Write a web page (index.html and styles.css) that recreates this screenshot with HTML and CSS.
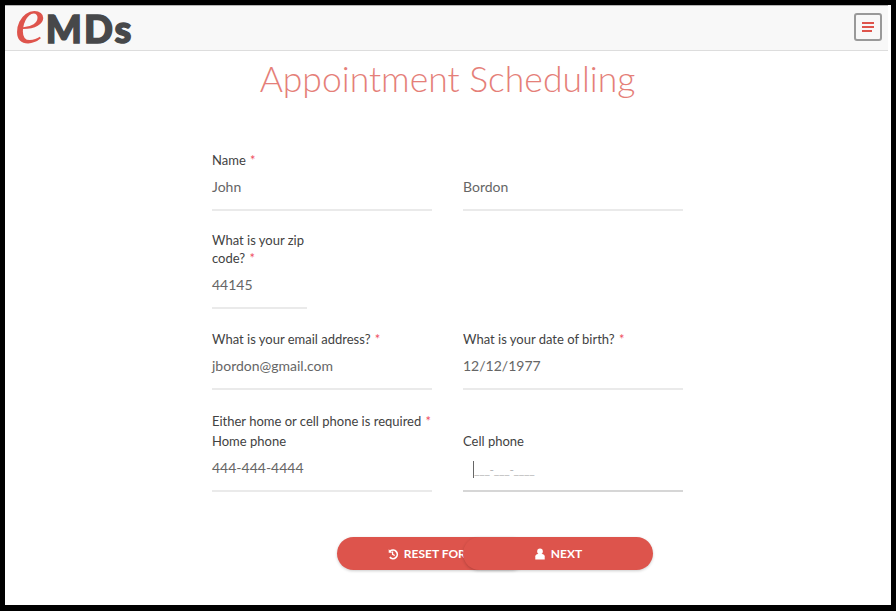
FILE: index.html
```html
<!DOCTYPE html>
<html>
<head>
<meta charset="utf-8">
<meta name="viewport" content="width=device-width, initial-scale=1.0">
<title>Appointment Scheduling</title>
<link rel="stylesheet" href="styles.css">
</head>
<body>
<div class="frame">
  <div class="navbar">
    <a class="logo"><span class="logo-e">e</span><span class="logo-mds">MDs</span></a>
    <button class="menu-toggle" type="button">
      <span></span><span></span><span class="short"></span>
    </button>
  </div>
  <h1 class="title">Appointment Scheduling</h1>
  <form class="form">
    <div class="row">
      <div class="field">
        <label>Name <i>*</i></label>
        <div class="value">John</div>
      </div>
      <div class="field">
        <label>&nbsp;</label>
        <div class="value">Bordon</div>
      </div>
    </div>
    <div class="row">
      <div class="field zip">
        <label>What is your zip code? <i>*</i></label>
        <div class="value">44145</div>
      </div>
    </div>
    <div class="row">
      <div class="field">
        <label>What is your email address? <i>*</i></label>
        <div class="value">jbordon@gmail.com</div>
      </div>
      <div class="field">
        <label>What is your date of birth? <i>*</i></label>
        <div class="value">12/12/1977</div>
      </div>
    </div>
    <p class="note">Either home or cell phone is required <i>*</i></p>
    <div class="row">
      <div class="field">
        <label>Home phone</label>
        <div class="value">444-444-4444</div>
      </div>
      <div class="field">
        <label>Cell phone</label>
        <div class="value focused"><span class="caret"></span><span class="mask">___-___-____</span></div>
      </div>
    </div>
    <div class="actions">
      <button class="btn" type="button">
        <svg class="icon" viewBox="0 0 14 14"><path d="M2 1.500v4h4L4.600 4.100A4 4 0 1 1 4 10l-1.500 1.400A6 6 0 1 0 3.200 2.700Z" fill="#fff"/><path d="M6.500 4v3.500l2.500 1.300" fill="none" stroke="#fff" stroke-width="1.500"/></svg>
        RESET FORM
      </button>
      <button class="btn btn-next" type="button">
        <svg class="icon" viewBox="0 0 14 14"><circle cx="7" cy="4" r="3.300" fill="#fff"/><path d="M1.500 13.500V10c0-2 1.500-3 3-3h5c1.500 0 3 1 3 3v3.500Z" fill="#fff"/></svg>
        NEXT
      </button>
    </div>
  </form>
</div>
</body>
</html>
```

FILE: styles.css
```css
html, body {
  margin: 0;
  height: 100%;
  background: #000;
}
body {
  padding: 5px 5px 6px 5px;
  box-sizing: border-box;
  font-family: Lato, "Open Sans", sans-serif;
  color: #424242;
}
.frame {
  height: 100%;
  background: #fff;
}
.navbar {
  height: 42px;
  margin-right: 3px;
  display: flex;
  align-items: center;
  justify-content: space-between;
  padding: 0 6px 2px 10px;
  background: #f8f8f8;
  border-top: 1px solid #b5b5b5;
  border-bottom: 1px solid #ddd;
}
.logo {
  display: flex;
  align-items: baseline;
  padding-bottom: 6px;
}
.logo-e {
  font-family: "Liberation Serif", serif;
  font-style: italic;
  font-size: 67px;
  line-height: 44px;
  color: #de544c;
}
.logo-mds {
  font-family: Lato, sans-serif;
  font-weight: 900;
  font-size: 38px;
  line-height: 44px;
  margin-left: 1px;
  letter-spacing: 2px;
  -webkit-text-stroke: 1.500px #47484a;
  color: #47484a;
}
.menu-toggle {
  width: 28px;
  height: 28px;
  padding: 0;
  display: flex;
  flex-direction: column;
  align-items: center;
  justify-content: center;
  gap: 2px;
  background: #f8f8f8;
  border: 2px solid #999;
  border-radius: 3px;
}
.menu-toggle span {
  width: 12px;
  height: 2px;
  background: #de544c;
}
.menu-toggle .short {
  width: 10px;
  margin-right: 2px;
}
.title {
  margin: 6px 0 0;
  padding-right: 1px;
  text-align: center;
  font-weight: 300;
  font-size: 35.500px;
  line-height: 44px;
  color: #e57f79;
}
.form {
  width: 471px;
  margin: 0 0 0 207px;
  padding: 50px 0 0;
  font-size: 13px;
}
.row {
  display: flex;
  gap: 31px;
  margin-bottom: 21px;
}
.row:first-child {
  margin-bottom: 20px;
}
.field {
  width: 220px;
}
.field.zip {
  width: 95px;
}
label, .note {
  display: block;
  line-height: 18px;
  color: #424242;
}
.note {
  margin: 0 0 2px;
  padding-top: 1px;
}
i {
  font-style: normal;
  color: #ef4f5f;
  margin-left: 1px;
}
.value {
  height: 36px;
  margin-top: 4px;
  line-height: 27px;
  color: #666;
  font-size: 14px;
  border-bottom: 2px solid #eaeaea;
}
.value.focused {
  display: flex;
  align-items: center;
  padding: 0 0 6px 10px;
  height: 30px;
  border-bottom-color: #d6d6d6;
}
.caret {
  width: 1px;
  height: 17px;
  background: #666;
}
.mask {
  font-size: 12px;
  letter-spacing: -0.300px;
  color: #b5b5b5;
}
.actions {
  display: flex;
  justify-content: flex-start;
  margin: 45px 0 0 125px;
}
.btn {
  width: 190px;
  height: 33px;
  padding: 0;
  display: flex;
  align-items: center;
  justify-content: center;
  gap: 5px;
  flex: none;
  border: 0;
  border-radius: 17px;
  background: #dd544c;
  color: #fff;
  font-family: inherit;
  font-weight: 700;
  font-size: 12px;
  box-shadow: 0 1px 3px rgba(0, 0, 0, 0.2);
}
.btn-next {
  margin-left: -64px;
}
.icon {
  width: 12px;
  height: 12px;
}
```
